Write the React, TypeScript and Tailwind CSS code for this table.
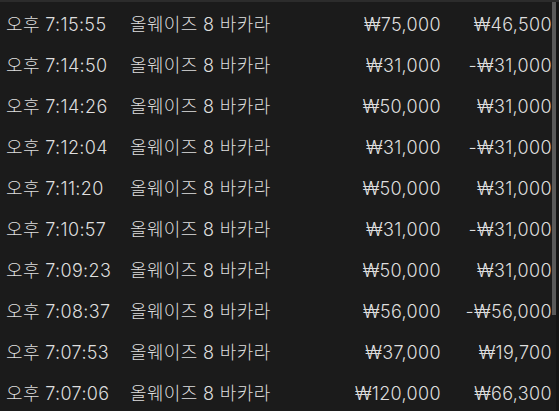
import React from "react";

const rows = [
  ["오후 7:15:55", "₩75,000", "₩46,500"],
  ["오후 7:14:50", "₩31,000", "-₩31,000"],
  ["오후 7:14:26", "₩50,000", "₩31,000"],
  ["오후 7:12:04", "₩31,000", "-₩31,000"],
  ["오후 7:11:20", "₩50,000", "₩31,000"],
  ["오후 7:10:57", "₩31,000", "-₩31,000"],
  ["오후 7:09:23", "₩50,000", "₩31,000"],
  ["오후 7:08:37", "₩56,000", "-₩56,000"],
  ["오후 7:07:53", "₩37,000", "₩19,700"],
  ["오후 7:07:06", "₩120,000", "₩66,300"],
];

export default function App() {
  return (
    <div
      className="relative w-[559px] h-[411px] overflow-hidden bg-[#1b1b1b] border-t-2 border-[#2c2c2c] text-[#dedede] text-[18px] font-light tracking-[0.35px]"
      style={{ fontFamily: 'Inter, "Noto Sans CJK KR", sans-serif' }}
    >
      <div className="pt-[2px]">
        {rows.map((r, i) => (
          <div key={i} className="flex items-center h-[41px] pl-[6px]">
            <div className="w-[124px] whitespace-nowrap">{r[0]}</div>
            <div className="w-[150px] whitespace-nowrap">올웨이즈 8 바카라</div>
            <div className="w-[161px] text-right whitespace-nowrap">{r[1]}</div>
            <div className="w-[111px] text-right whitespace-nowrap">{r[2]}</div>
          </div>
        ))}
      </div>
      <div className="absolute right-[3px] top-0 w-[4px] h-[313px] bg-[#5a5a5a]" />
      <div className="absolute right-0 top-0 w-[3px] h-full bg-[#141414]" />
    </div>
  );
}
